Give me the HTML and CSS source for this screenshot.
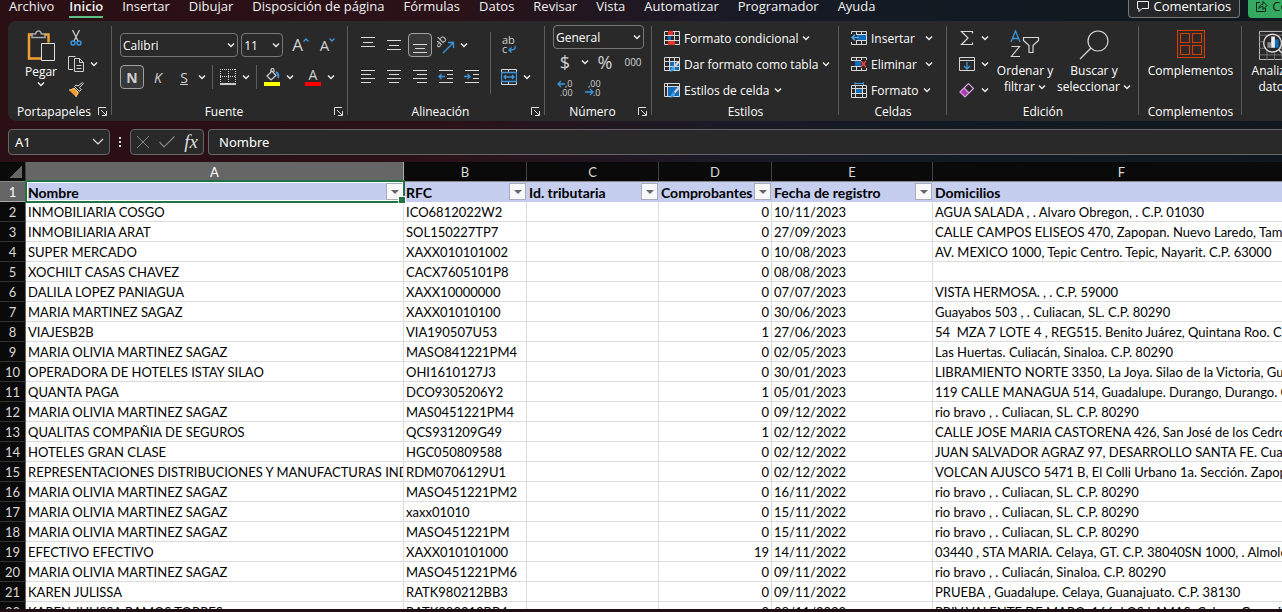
FILE: index.html
```html
<!DOCTYPE html>
<html lang="es">
<head>
  <meta charset="UTF-8">
  <meta name="viewport" content="width=device-width, initial-scale=1.0">
  <title>Nombre - Excel</title>
  <link rel="stylesheet" href="styles.css">
</head>
<body>
  <svg class="defs" aria-hidden="true">
    <symbol id="chev" viewBox="0 0 8 8"><path d="M1 2.5l3 3 3-3" fill="none" stroke="#e8e8e8" stroke-width="1.5"/></symbol>
    <symbol id="launch" viewBox="0 0 9 9"><path d="M.5 8V.5H8M3 3l5 5M8.500 4v4.500H4" fill="none" stroke="#ddd"/></symbol>
    <symbol id="brush" viewBox="0 0 10 11"><path d="M9.500.5L5 5.500" stroke="#d0d0d0" stroke-width="2.500"/><path d="M0 10.500c2-.5 1-4 3.500-5 2 0 2.500 2 1.500 3.500-1.500 1.500-3 1.500-5 1.500z" fill="#4aa0e0"/></symbol>
  </svg>

  <nav class="tabs">
    <a href="#">Archivo</a>
    <a href="#" class="active">Inicio</a>
    <a href="#">Insertar</a>
    <a href="#">Dibujar</a>
    <a href="#">Disposición de página</a>
    <a href="#">Fórmulas</a>
    <a href="#">Datos</a>
    <a href="#">Revisar</a>
    <a href="#">Vista</a>
    <a href="#">Automatizar</a>
    <a href="#">Programador</a>
    <a href="#">Ayuda</a>
    <div class="actions">
      <button class="comments"><svg width="12" height="12" viewBox="0 0 12 12"><path d="M.5 1.500h11v7H5l-3 3v-3H.5z" fill="none" stroke="#eee"/></svg>Comentarios</button>
      <button class="share"><svg width="12" height="12" viewBox="0 0 12 12"><path d="M4 2.500H.5v9h9V8M3 8.500c0-3 2-4 4-4v-3l4 4-4 4V6.500C5 6.500 4 7 3 8.500z" fill="none" stroke="#0c2014"/></svg>Compartir</button>
    </div>
  </nav>

  <div class="ribbon">
    <section class="group clipboard">
      <div class="group-body">
        <button class="big paste">
          <svg width="28" height="32" viewBox="0 0 28 32"><path d="M6 4.500H2v24h12M17 4.500h4.500v8" fill="none" stroke="#f0a030" stroke-width="2.500"/><path d="M5 7.500V4h3.500C9 1.500 10 1 11.500 1s2.500.5 3 3H18v3.500z" fill="#292929" stroke="#a8a8a8" stroke-width="1.500"/><path d="M14.500 13.500h13v17h-13z" fill="#292929" stroke="#e0e0e0"/></svg>
          <span>Pegar</span>
          <svg class="chev"><use href="#chev"/></svg>
        </button>
        <div class="stack">
          <button aria-label="Cortar"><svg width="16" height="16" viewBox="0 0 16 16"><path d="M4.500 0l5.500 11M11.500 0L6 11" stroke="#ccc" stroke-width="1.300"/><g fill="none" stroke="#3a96dd" stroke-width="1.500"><circle cx="5" cy="13" r="2"/><circle cx="11" cy="13" r="2"/></g></svg></button>
          <button aria-label="Copiar"><svg width="16" height="16" viewBox="0 0 16 16" fill="none" stroke="#d0d0d0"><path d="M5 13.500H.5V.5h7"/><path d="M6.500 2.500h5l4 4v9h-9z"/><path d="M11.500 2.500v4h4M8.500 9.500h5M8.500 12.500h5"/></svg><svg class="chev"><use href="#chev"/></svg></button>
          <button aria-label="Copiar formato"><svg width="16" height="16" viewBox="0 0 16 16"><path d="M1 8l7 7 3-4-5-5z" fill="#f0a030"/><path d="M1 8c2 0 4-1 5-2l4 4c-1 2-1 3-2 5" fill="none" stroke="#f6c888"/><path d="M6.500 4.500l5 5 1.500-2-1.500-2 4-4-1-1-4.500 3.500-2-1z" fill="#292929" stroke="#d8d8d8"/></svg></button>
        </div>
      </div>
      <div class="group-label"><span>Portapapeles</span><button aria-label="Portapapeles: opciones"><svg class="launch"><use href="#launch"/></svg></button></div>
    </section>

    <section class="group font">
      <div class="group-body two-rows">
        <div class="row">
          <select class="font-name" aria-label="Fuente"><option>Calibri</option></select>
          <select class="font-size" aria-label="Tamaño de fuente"><option>11</option></select>
          <button class="tool grow" aria-label="Aumentar tamaño">A<svg width="6" height="4" viewBox="0 0 6 4"><path d="M.5 3.500L3 1l2.500 2.500" fill="none" stroke="#3a96dd" stroke-width="1.300"/></svg></button>
          <button class="tool shrink" aria-label="Disminuir tamaño">A<svg width="6" height="4" viewBox="0 0 6 4"><path d="M.5.5L3 3 5.500.5" fill="none" stroke="#3a96dd" stroke-width="1.300"/></svg></button>
        </div>
        <div class="row">
          <button class="tool on"><b>N</b></button>
          <button class="tool"><i>K</i></button>
          <button class="tool"><u>S</u></button>
          <svg class="chev"><use href="#chev"/></svg>
          <span class="sep"></span>
          <button class="tool" aria-label="Bordes"><svg width="16" height="16" viewBox="0 0 16 16"><path d="M.5 0v14M15.500 0v14M0 .5h16M8.500 0v14M0 7.500h16" fill="none" stroke="#d0d0d0" stroke-dasharray="1 1"/><path d="M0 15h16" stroke="#fff" stroke-width="1.500"/></svg></button>
          <svg class="chev"><use href="#chev"/></svg>
          <span class="sep"></span>
          <button class="tool" aria-label="Color de relleno"><svg width="16" height="18" viewBox="0 0 16 18"><path d="M3 8l5-5 4 4.500-5 4.500zM7 5V2c0-2 3-2 3 0v2" fill="none" stroke="#d0d0d0" stroke-width="1.200"/><path d="M12 4c2 1 3 4 2 6" fill="none" stroke="#3a96dd" stroke-width="2"/><path d="M0 14h16v4H0z" fill="#ffff00"/></svg></button>
          <svg class="chev"><use href="#chev"/></svg>
          <button class="tool font-color" aria-label="Color de fuente">A</button>
          <svg class="chev"><use href="#chev"/></svg>
        </div>
      </div>
      <div class="group-label"><span>Fuente</span><button aria-label="Fuente: opciones"><svg class="launch"><use href="#launch"/></svg></button></div>
    </section>

    <section class="group align">
      <div class="group-body">
        <div class="two-rows">
          <div class="row">
            <button class="tool" aria-label="Alinear arriba"><svg width="16" height="16" viewBox="0 0 16 16" stroke="#d8d8d8"><path d="M1 .5h14M3 5.500h10M1 9.500h14"/></svg></button>
            <button class="tool" aria-label="Alinear en medio"><svg width="16" height="16" viewBox="0 0 16 16" stroke="#d8d8d8"><path d="M1 3.500h14M3 8.500h10M1 12.500h14"/></svg></button>
            <button class="tool on" aria-label="Alinear abajo"><svg width="16" height="16" viewBox="0 0 16 16" stroke="#d8d8d8"><path d="M1 7.500h14M3 11.500h10M1 15.500h14"/></svg></button>
            <button class="tool" aria-label="Orientación"><svg width="18" height="18" viewBox="0 0 18 18"><text x="-1" y="9" transform="rotate(-45 4 8)" font-size="11" fill="#d0d0d0">ab</text><path d="M6 17L16 7M11 6.500h5.500V12" fill="none" stroke="#3a96dd" stroke-width="1.300"/></svg></button>
            <svg class="chev"><use href="#chev"/></svg>
          </div>
          <div class="row">
            <button class="tool" aria-label="Alinear a la izquierda"><svg width="16" height="16" viewBox="0 0 16 16" stroke="#d8d8d8"><path d="M1 1.500h14M1 5.500h10M1 9.500h14M1 13.500h10"/></svg></button>
            <button class="tool" aria-label="Centrar"><svg width="16" height="16" viewBox="0 0 16 16" stroke="#d8d8d8"><path d="M1 1.500h14M3 5.500h10M1 9.500h14M3 13.500h10"/></svg></button>
            <button class="tool" aria-label="Alinear a la derecha"><svg width="16" height="16" viewBox="0 0 16 16" stroke="#d8d8d8"><path d="M1 1.500h14M5 5.500h10M1 9.500h14M5 13.500h10"/></svg></button>
            <button class="tool" aria-label="Disminuir sangría"><svg width="16" height="16" viewBox="0 0 16 16" fill="none"><path d="M1 1.500h14M9 5.500h6M9 9.500h6M1 13.500h14" stroke="#d8d8d8"/><path d="M7 7.500H1M3.500 5L1 7.500 3.500 10" stroke="#3a96dd" stroke-width="1.300"/></svg></button>
            <button class="tool" aria-label="Aumentar sangría"><svg width="16" height="16" viewBox="0 0 16 16" fill="none"><path d="M1 1.500h14M9 5.500h6M9 9.500h6M1 13.500h14" stroke="#d8d8d8"/><path d="M0 7.500h6M3.500 5L6 7.500 3.500 10" stroke="#3a96dd" stroke-width="1.300"/></svg></button>
          </div>
        </div>
        <span class="sep tall"></span>
        <div class="two-rows">
          <div class="row">
            <button class="tool" aria-label="Ajustar texto"><svg width="16" height="18" viewBox="0 0 16 18"><text x="1" y="8" font-size="11" fill="#d0d0d0">ab</text><text x="1" y="17" font-size="11" fill="#d0d0d0">c</text><path d="M14 10c1 4-2 4-6 4M10.500 11.500L8 14l2.500 2.500" fill="none" stroke="#3a96dd" stroke-width="1.300"/></svg></button>
          </div>
          <div class="row">
            <button class="tool" aria-label="Combinar y centrar"><svg width="16" height="16" viewBox="0 0 16 16" fill="none"><path d="M.5 3V.5h15V3M7.500 0v3M.5 13v2.500h15V13M7.500 13v3" stroke="#d8d8d8"/><path d="M.5 3.500h15v9H.5zM3 8h10M5 6L3 8l2 2M11 6l2 2-2 2" stroke="#3a96dd" stroke-width="1.300"/></svg></button>
            <svg class="chev"><use href="#chev"/></svg>
          </div>
        </div>
      </div>
      <div class="group-label"><span>Alineación</span><button aria-label="Alineación: opciones"><svg class="launch"><use href="#launch"/></svg></button></div>
    </section>

    <section class="group number">
      <div class="group-body stack">
        <select aria-label="Formato de número"><option>General</option></select>
        <div class="row formats">
          <button class="tool">$</button>
          <svg class="chev"><use href="#chev"/></svg>
          <button class="tool">%</button>
          <button class="tool thousands">000</button>
        </div>
        <div class="row">
          <button class="tool" aria-label="Aumentar decimales"><svg width="16" height="16" viewBox="0 0 16 16" font-size="9" fill="#d0d0d0"><text x="8" y="7">,0</text><text x="3" y="16">,00</text><path d="M8 4H1M4 1L1 4l3 3" fill="none" stroke="#3a96dd" stroke-width="1.300"/></svg></button>
          <button class="tool" aria-label="Disminuir decimales"><svg width="16" height="16" viewBox="0 0 16 16" font-size="9" fill="#d0d0d0"><text x="3" y="7">,00</text><text x="8" y="16">,0</text><path d="M0 12h8M5 9l3 3-3 3" fill="none" stroke="#3a96dd" stroke-width="1.300"/></svg></button>
        </div>
      </div>
      <div class="group-label"><span>Número</span><button aria-label="Número: opciones"><svg class="launch"><use href="#launch"/></svg></button></div>
    </section>

    <section class="group styles">
      <div class="group-body stack">
        <button class="item"><svg width="16" height="14" viewBox="0 0 16 14"><path d="M.5.5h15v13H.5zM0 4.500h16M0 9.500h16M4.500 0v14M10.500 0v14" fill="none" stroke="#d8d8d8"/><path d="M4 0h5v4H4zM4 10h7v4H4z" fill="#e8362c"/><path d="M4 5h3v4H4z" fill="#0f6cbd"/></svg>Formato condicional<svg class="chev"><use href="#chev"/></svg></button>
        <button class="item"><svg width="16" height="15" viewBox="0 0 16 15"><path d="M5 5h10v9H5z" fill="#0f6cbd"/><path d="M.5.5h15v13H.5zM0 4.500h16M0 9.500h16M5.500 0v14M10.500 0v14" fill="none" stroke="#d8d8d8"/><use href="#brush" x="5" y="4" width="11" height="11"/></svg>Dar formato como tabla<svg class="chev"><use href="#chev"/></svg></button>
        <button class="item"><svg width="16" height="15" viewBox="0 0 16 15"><path d="M3 4h12v9H3z" fill="#0f6cbd"/><path d="M.5.5h15v13H.5zM0 3.500h16M3.500 0v14" fill="none" stroke="#d8d8d8"/><use href="#brush" x="5" y="4" width="11" height="11"/></svg>Estilos de celda<svg class="chev"><use href="#chev"/></svg></button>
      </div>
      <div class="group-label"><span>Estilos</span></div>
    </section>

    <section class="group cells">
      <div class="group-body stack">
        <button class="item"><svg width="16" height="14" viewBox="0 0 16 14"><path d="M.5 3V.5h15v13H.5V11M5.500 0v4M10.500 0v14M5.500 10v4M5 3.500h11M5 9.500h11" fill="none" stroke="#d8d8d8"/><path d="M6 4h9v5H6z" fill="#0f6cbd"/><path d="M8 6.500H1M4 3.500l-3 3 3 3" fill="none" stroke="#4aa8ee" stroke-width="1.500"/></svg><span>Insertar</span><svg class="chev"><use href="#chev"/></svg></button>
        <button class="item"><svg width="16" height="14" viewBox="0 0 16 14"><path d="M.5 4V.5h15V3M.5 10v3.500h15V11M5.500 0v4M10.500 0v3M5.500 10v4M10.500 11v3M0 3.500h10M0 9.500h10" fill="none" stroke="#d8d8d8"/><path d="M4 4h6v5H4z" fill="#0f6cbd"/><path d="M10 4l5 6M15 4l-5 6" stroke="#e84a42" stroke-width="1.500"/></svg><span>Eliminar</span><svg class="chev"><use href="#chev"/></svg></button>
        <button class="item"><svg width="16" height="16" viewBox="0 0 16 16"><path d="M5 6h7v6H5z" fill="#0f6cbd"/><path d="M.5 3.500h15v12H.5zM4.500 3v13M11.500 3v13M0 6.500h16M0 11.500h16" fill="none" stroke="#d8d8d8"/><path d="M4 1.500h9M4 0v3M12.500 0v3" stroke="#3a96dd"/></svg>Formato<svg class="chev"><use href="#chev"/></svg></button>
      </div>
      <div class="group-label"><span>Celdas</span></div>
    </section>

    <section class="group edit">
      <div class="group-body">
        <div class="stack">
          <button aria-label="Autosuma"><svg width="16" height="16" viewBox="0 0 16 16"><path d="M13.500 3.500v-2h-11L9 8l-6.500 6.500h11v-2" fill="none" stroke="#d8d8d8" stroke-width="1.200"/></svg><svg class="chev"><use href="#chev"/></svg></button>
          <button aria-label="Rellenar"><svg width="16" height="14" viewBox="0 0 16 14"><path d="M.5.5h15v13H.5zM0 3.500h16" fill="none" stroke="#d8d8d8"/><path d="M8 5v7M5 9l3 3 3-3" fill="none" stroke="#3a96dd" stroke-width="1.300"/></svg><svg class="chev"><use href="#chev"/></svg></button>
          <button aria-label="Borrar"><svg width="16" height="16" viewBox="0 0 16 16"><path d="M1 10l4-4 5 5-4 4z" fill="#a63fb0"/><path d="M1 10l8.500-8.500 5 5L6 15zM5 6l5 5" fill="none" stroke="#e0a0e0" stroke-width="1.200"/></svg><svg class="chev"><use href="#chev"/></svg></button>
        </div>
        <button class="big sort">
          <svg width="30" height="30" viewBox="0 0 30 30"><path d="M1 12L5.500 1 10 12M2.500 8.500h6" fill="none" stroke="#3a96dd" stroke-width="1.300"/><path d="M1.500 16.500h8l-8 10h8.500" fill="none" stroke="#d8d8d8" stroke-width="1.200"/><path d="M13.500 7.500h15v3l-5.500 5v7h-4v-7l-5.500-5z" fill="none" stroke="#d8d8d8" stroke-width="1.200"/></svg>
          <span>Ordenar y<br>filtrar <svg class="chev"><use href="#chev"/></svg></span>
        </button>
        <button class="big find">
          <svg width="30" height="30" viewBox="0 0 30 30"><circle cx="19" cy="11" r="10" fill="none" stroke="#d8d8d8" stroke-width="1.200"/><path d="M12 18L1 29" stroke="#d8d8d8" stroke-width="1.200"/></svg>
          <span>Buscar y<br>seleccionar <svg class="chev"><use href="#chev"/></svg></span>
        </button>
      </div>
      <div class="group-label"><span>Edición</span></div>
    </section>

    <section class="group addins">
      <div class="group-body">
        <button class="big">
          <svg width="28" height="30" viewBox="0 0 28 30" fill="none" stroke="#d83b01" stroke-width="1.200"><path d="M.5.5h27v27H.5zM3.500 3.500h9v9h-9zM15.500 3.500h9v9h-9zM3.500 15.500h9v9h-9zM15.500 15.500h9v9h-9z"/></svg>
          <span>Complementos</span>
        </button>
      </div>
      <div class="group-label"><span>Complementos</span></div>
    </section>

    <section class="group analysis">
      <div class="group-body">
        <button class="big">
          <svg width="32" height="30" viewBox="0 0 32 32"><path d="M.5 1.500h31v30H.5z" fill="#292929" stroke="#c8c8c8"/><path d="M0 5.500h32M0 12.500h32M0 19.500h32M0 26.500h32M8.500 20v12M16.500 20v12M24.500 20v12" stroke="#777"/><circle cx="14.500" cy="14" r="9.500" fill="#292929" stroke="#d8d8d8" stroke-width="1.500"/><path d="M9 13h4v6H9z" fill="#888"/><path d="M13 7h4v12h-4z" fill="#eee"/><path d="M17 10h4v9h-4z" fill="#0f6cbd"/><path d="M21 21l8 8" stroke="#d8d8d8" stroke-width="1.500"/></svg>
          <span>Analizar<br>datos</span>
        </button>
      </div>
    </section>
  </div>

  <div class="formula-bar">
    <input class="name-box" aria-label="Cuadro de nombres" value="A1">
    <svg width="20" height="12" viewBox="0 0 20 12"><path d="M9 1h2v2H9zM9 5h2v2H9zM9 9h2v2H9z" fill="#ddd"/></svg>
    <div class="fx">
      <button aria-label="Cancelar"><svg width="14" height="14" viewBox="0 0 14 14"><path d="M1 1l12 12M13 1L1 13" stroke="#858585"/></svg></button>
      <button aria-label="Introducir"><svg width="16" height="12" viewBox="0 0 16 12"><path d="M.5 6L5 11 15.500.5" fill="none" stroke="#858585" stroke-width="1.200"/></svg></button>
      <button class="fx-label">fx</button>
    </div>
    <input class="formula" aria-label="Barra de fórmulas" value="Nombre">
  </div>

  <main class="sheet">
    <table>
      <colgroup><col class="col-num"><col class="col-a"><col class="col-b"><col class="col-c"><col class="col-d"><col class="col-e"><col class="col-f"></colgroup>
      <thead>
        <tr><th class="corner"></th><th class="selected">A</th><th>B</th><th>C</th><th>D</th><th>E</th><th>F</th></tr>
      </thead>
      <tbody>
        <tr class="titles"><th class="selected">1</th><td class="active-cell">Nombre<button class="filter" aria-label="Filtrar Nombre"></button><span class="cursor"></span></td><td>RFC<button class="filter" aria-label="Filtrar RFC"></button></td><td>Id. tributaria<button class="filter" aria-label="Filtrar Id. tributaria"></button></td><td>Comprobantes<button class="filter" aria-label="Filtrar Comprobantes"></button></td><td>Fecha de registro<button class="filter" aria-label="Filtrar Fecha de registro"></button></td><td>Domicilios</td></tr>
        <tr><th>2</th><td>INMOBILIARIA COSGO</td><td>ICO6812022W2</td><td></td><td>0</td><td>10/11/2023</td><td>AGUA SALADA , . Alvaro Obregon, . C.P. 01030</td></tr>
        <tr><th>3</th><td>INMOBILIARIA ARAT</td><td>SOL150227TP7</td><td></td><td>0</td><td>27/09/2023</td><td>CALLE CAMPOS ELISEOS 470, Zapopan. Nuevo Laredo, Tamaulipas.</td></tr>
        <tr><th>4</th><td>SUPER MERCADO</td><td>XAXX010101002</td><td></td><td>0</td><td>10/08/2023</td><td>AV. MEXICO 1000, Tepic Centro. Tepic, Nayarit. C.P. 63000</td></tr>
        <tr><th>5</th><td>XOCHILT CASAS CHAVEZ</td><td>CACX7605101P8</td><td></td><td>0</td><td>08/08/2023</td><td></td></tr>
        <tr><th>6</th><td>DALILA LOPEZ PANIAGUA</td><td>XAXX10000000</td><td></td><td>0</td><td>07/07/2023</td><td>VISTA HERMOSA. , . C.P. 59000</td></tr>
        <tr><th>7</th><td>MARIA MARTINEZ SAGAZ</td><td>XAXX01010100</td><td></td><td>0</td><td>30/06/2023</td><td>Guayabos 503 , . Culiacan, SL. C.P. 80290</td></tr>
        <tr><th>8</th><td>VIAJESB2B</td><td>VIA190507U53</td><td></td><td>1</td><td>27/06/2023</td><td>54  MZA 7 LOTE 4 , REG515. Benito Juárez, Quintana Roo. C.P.</td></tr>
        <tr><th>9</th><td>MARIA OLIVIA MARTINEZ SAGAZ</td><td>MASO841221PM4</td><td></td><td>0</td><td>02/05/2023</td><td>Las Huertas. Culiacán, Sinaloa. C.P. 80290</td></tr>
        <tr><th>10</th><td>OPERADORA DE HOTELES ISTAY SILAO</td><td>OHI1610127J3</td><td></td><td>0</td><td>30/01/2023</td><td>LIBRAMIENTO NORTE 3350, La Joya. Silao de la Victoria, Guanajuato.</td></tr>
        <tr><th>11</th><td>QUANTA PAGA</td><td>DCO9305206Y2</td><td></td><td>1</td><td>05/01/2023</td><td>119 CALLE MANAGUA 514, Guadalupe. Durango, Durango. C.P.</td></tr>
        <tr><th>12</th><td>MARIA OLIVIA MARTINEZ SAGAZ</td><td>MAS0451221PM4</td><td></td><td>0</td><td>09/12/2022</td><td>rio bravo , . Culiacan, SL. C.P. 80290</td></tr>
        <tr><th>13</th><td>QUALITAS COMPAÑIA DE SEGUROS</td><td>QCS931209G49</td><td></td><td>1</td><td>02/12/2022</td><td>CALLE JOSE MARIA CASTORENA 426, San José de los Cedros.</td></tr>
        <tr><th>14</th><td>HOTELES GRAN CLASE</td><td>HGC050809588</td><td></td><td>0</td><td>02/12/2022</td><td>JUAN SALVADOR AGRAZ 97, DESARROLLO SANTA FE. Cuajimalpa</td></tr>
        <tr><th>15</th><td>REPRESENTACIONES DISTRIBUCIONES Y MANUFACTURAS INDUSTRIALES</td><td>RDM0706129U1</td><td></td><td>0</td><td>02/12/2022</td><td>VOLCAN AJUSCO 5471 B, El Colli Urbano 1a. Sección. Zapopan</td></tr>
        <tr><th>16</th><td>MARIA OLIVIA MARTINEZ SAGAZ</td><td>MASO451221PM2</td><td></td><td>0</td><td>16/11/2022</td><td>rio bravo , . Culiacan, SL. C.P. 80290</td></tr>
        <tr><th>17</th><td>MARIA OLIVIA MARTINEZ SAGAZ</td><td>xaxx01010</td><td></td><td>0</td><td>15/11/2022</td><td>rio bravo , . Culiacan, SL. C.P. 80290</td></tr>
        <tr><th>18</th><td>MARIA OLIVIA MARTINEZ SAGAZ</td><td>MASO451221PM</td><td></td><td>0</td><td>15/11/2022</td><td>rio bravo , . Culiacan, SL. C.P. 80290</td></tr>
        <tr><th>19</th><td>EFECTIVO EFECTIVO</td><td>XAXX010101000</td><td></td><td>19</td><td>14/11/2022</td><td>03440 , STA MARIA. Celaya, GT. C.P. 38040SN 1000, . Almoloya</td></tr>
        <tr><th>20</th><td>MARIA OLIVIA MARTINEZ SAGAZ</td><td>MASO451221PM6</td><td></td><td>0</td><td>09/11/2022</td><td>rio bravo , . Culiacán, Sinaloa. C.P. 80290</td></tr>
        <tr><th>21</th><td>KAREN JULISSA</td><td>RATK980212BB3</td><td></td><td>0</td><td>09/11/2022</td><td>PRUEBA , Guadalupe. Celaya, Guanajuato. C.P. 38130</td></tr>
        <tr><th>22</th><td>KAREN JULISSA RAMOS TORRES</td><td>RATK980212BB4</td><td></td><td>0</td><td>08/11/2022</td><td>PRIV VALENTE DE MARO, 166, LOS LAMAS. Celaya, Guanajuato</td></tr>
      </tbody>
    </table>
  </main>
  <footer class="bottom"></footer>
</body>
</html>
```
FILE: styles.css
```css
* {
  box-sizing: border-box;
}
body {
  margin: 0;
  height: 100vh;
  display: flex;
  flex-direction: column;
  overflow: hidden;
  font-family: "Open Sans", "Noto Sans", sans-serif;
  font-size: 12px;
  color: #fff;
  background: linear-gradient(90deg, #2a0f14 0%, #2a1218 35%, #1b1a26 55%, #111a22 75%, #10171f 100%);
}
button, input, select {
  font: inherit;
  color: inherit;
  border: none;
  background: none;
  padding: 0;
  margin: 0;
}
svg {
  flex: none;
}
.defs {
  position: absolute;
  width: 0;
  height: 0;
}
.chev {
  width: 8px;
  height: 8px;
}
.launch {
  width: 9px;
  height: 9px;
}

/* tabs */
.tabs {
  display: flex;
  flex: none;
  height: 21px;
  padding-left: 9px;
  gap: 19px;
  overflow: hidden;
  font-size: 13px;
  line-height: 12px;
}
.tabs a {
  flex: none;
  height: 18px;
  color: #f0f0f0;
  text-decoration: none;
  white-space: nowrap;
}
.tabs .active {
  margin-left: -4px;
  font-weight: 600;
  border-bottom: 2px solid #5fbf80;
}
.actions {
  display: flex;
  flex: none;
  gap: 8px;
  margin-left: auto;
  margin-right: -60px;
}
.actions button {
  display: flex;
  align-items: center;
  gap: 4px;
  height: 18px;
  padding: 0 8px 6px;
  border-radius: 0 0 4px 4px;
}
.comments {
  background: #242628;
  border: 1px solid #777;
  border-top: none;
}
.share {
  background: #35a862;
  color: #0c2014;
}

/* ribbon */
.ribbon {
  display: flex;
  flex: none;
  height: 100px;
  margin-left: 8px;
  overflow: hidden;
  background: #292929;
  border-radius: 8px 0 0 8px;
}
.group {
  position: relative;
  flex: none;
  display: flex;
  flex-direction: column;
  padding: 4px 8px 0;
}
.group::after {
  content: "";
  position: absolute;
  right: 0;
  top: 5px;
  bottom: 6px;
  width: 1px;
  background: #5c5c5c;
}
.clipboard { width: 104px; }
.font { width: 236px; }
.align { width: 197px; }
.number { width: 107px; }
.styles { width: 187px; }
.cells { width: 108px; }
.edit { width: 192px; }
.addins { width: 103px; }
.analysis { flex: 1 0 64px; padding: 4px 0 0; }
.analysis::after { display: none; }

.group-body {
  display: flex;
  height: 78px;
}
.group-label {
  display: flex;
  align-items: center;
  height: 16px;
}
.group-label span {
  flex: 1;
  text-align: center;
}
.group-label button {
  display: flex;
  width: 8px;
  margin-right: -2px;
}
.group-label:has(button) span {
  margin-right: 6px;
}
.stack {
  display: flex;
  flex-direction: column;
}
.stack > button {
  display: flex;
  align-items: center;
  gap: 6px;
  height: 26px;
}
.row {
  display: flex;
  align-items: center;
  height: 24px;
}
.two-rows {
  display: flex;
  flex-direction: column;
  gap: 8px;
  padding-top: 8px;
}
.tool {
  display: flex;
  flex: none;
  align-items: center;
  justify-content: center;
  width: 24px;
  height: 24px;
  font-size: 14px;
  color: #d0d0d0;
}
.tool.on {
  border: 1px solid #a0a0a0;
  border-radius: 4px;
  background: #383838;
}
.sep {
  flex: none;
  width: 1px;
  height: 24px;
  background: #5c5c5c;
}
.sep.tall {
  height: 62px;
  margin: 7px 6px 0;
}
.big {
  display: flex;
  flex-direction: column;
  align-items: center;
  padding-top: 5px;
  line-height: 16px;
  white-space: nowrap;
}
.big > span {
  margin-top: 3px;
}
select {
  appearance: none;
  height: 24px;
  padding: 0 2px;
  border: 1px solid #777;
  border-radius: 4px;
  background: #292929 url("data:image/svg+xml,%3Csvg xmlns='http://www.w3.org/2000/svg' width='8' height='8'%3E%3Cpath d='M1 2.5l3 3 3-3' fill='none' stroke='%23e8e8e8' stroke-width='1.5'/%3E%3C/svg%3E") no-repeat right 2px center;
}

.paste {
  width: 50px;
}
.paste > span {
  margin-top: 2px;
}
.clipboard .stack {
  margin-left: 2px;
}
.font-name {
  width: 122px;
  margin-right: 3px;
}
.font-size {
  width: 43px;
  margin-right: 5px;
}
.grow, .shrink {
  align-items: flex-start;
  width: 25px;
  font-size: 17px;
  line-height: 24px;
}
.shrink {
  font-size: 15px;
}
.grow svg, .shrink svg {
  margin-top: 5px;
}
.font .row .tool + .tool {
  margin-left: 2px;
}
.font .chev {
  margin: 0 2px;
}
.font .sep {
  margin: 0 3px 0 4px;
}
.font-color {
  flex-direction: column;
  margin-left: 5px;
  line-height: 14px;
}
.font-color::after {
  content: "";
  width: 16px;
  height: 4px;
  background: #f00;
}
.align .row {
  gap: 2px;
}
.number select {
  width: 91px;
}
.number .row {
  height: 26px;
  gap: 4px;
}
.formats .tool {
  font-size: 18px;
}
.formats .thousands {
  font-size: 10px;
}
.item {
  white-space: nowrap;
}
.stack > .item {
  gap: 4px;
  padding-left: 4px;
}
.item > span {
  width: 50px;
  text-align: left;
}
.edit .stack {
  padding-left: 4px;
}
.sort {
  width: 60px;
  margin-left: 6px;
}
.find {
  width: 74px;
  margin-left: 2px;
}
.addins .big, .analysis .big {
  flex: 1;
}

/* formula bar */
.formula-bar {
  display: flex;
  flex: none;
  align-items: center;
  height: 41px;
  padding-left: 8px;
  font-family: "Noto Sans", sans-serif;
  font-size: 13px;
}
.name-box, .fx, .formula {
  height: 26px;
  border: 1px solid #666;
  border-radius: 4px;
  background-color: #292929;
}
.name-box {
  width: 102px;
  padding: 0 6px;
  background-image: url("data:image/svg+xml,%3Csvg xmlns='http://www.w3.org/2000/svg' width='12' height='8'%3E%3Cpath d='M1 1l5 5 5-5' fill='none' stroke='%23ddd' stroke-width='1.2'/%3E%3C/svg%3E");
  background-repeat: no-repeat;
  background-position: right 5px center;
}
.fx {
  display: flex;
  align-items: center;
  justify-content: space-between;
  width: 74px;
  padding: 0 5px;
}
.fx button {
  display: flex;
}
.fx .fx-label {
  font: italic 19px/20px "Liberation Serif", serif;
  color: #ddd;
}
.formula {
  flex: 1;
  margin-left: 4px;
  padding: 0 10px;
  border-right: none;
  border-radius: 4px 0 0 4px;
}

/* sheet */
.sheet {
  flex: 1;
  min-height: 0;
  overflow: hidden;
  background: #fff;
}
table {
  width: 1311px;
  min-width: 100%;
  table-layout: fixed;
  border-collapse: separate;
  border-spacing: 0;
  font-family: Lato, "Noto Sans", sans-serif;
  font-size: 13px;
  color: #000;
}
.col-num { width: 26px; }
.col-a { width: 378px; }
.col-b { width: 123px; }
.col-c { width: 132px; }
.col-d { width: 113px; }
.col-e { width: 161px; }
th, td {
  height: 20px;
  padding: 2px 2px 0;
  line-height: 17px;
  border-right: 1px solid #dcdcdc;
  border-bottom: 1px solid #dcdcdc;
  overflow: hidden;
  white-space: pre;
}
th {
  padding: 2px 0 0;
  font-weight: normal;
  text-align: center;
  color: #d8d8d8;
  background: #0a0a0a;
  border-right-color: #666;
  border-bottom-color: #333;
}
thead th {
  border-right-color: #444;
  border-bottom-color: #888;
}
th.selected {
  color: #fff;
  background: #666;
  border-color: #aaa;
}
.corner {
  background: linear-gradient(135deg, transparent 50%, #666 50%) no-repeat 10px 4px / 12px 12px #0a0a0a;
}
td:nth-child(5) {
  text-align: right;
}
.titles td {
  position: relative;
  font-size: 14px;
  font-weight: bold;
  text-align: left;
  background: #c6cef0;
  border-color: #c6cef0;
}
.titles .active-cell {
  overflow: visible;
}
.filter {
  position: absolute;
  right: 0;
  top: 1px;
  width: 17px;
  height: 17px;
  border: 1px solid #a8acb8;
  background: #f8f8fa;
}
.filter::after {
  content: "";
  display: block;
  width: 0;
  margin: 1px auto 0;
  border: 4px solid transparent;
  border-top-color: #666;
  border-bottom: none;
}
.cursor {
  position: absolute;
  inset: -2px -2px -2px -1px;
  z-index: 1;
  border: 2px solid #217346;
  box-shadow: inset 0 0 0 1px #fff;
  pointer-events: none;
}
.cursor::after {
  content: "";
  position: absolute;
  right: -3px;
  bottom: -3px;
  width: 6px;
  height: 6px;
  background: #217346;
  border: 1px solid #fff;
}
.bottom {
  flex: none;
  height: 3px;
  background: #1e0e14;
}
```
